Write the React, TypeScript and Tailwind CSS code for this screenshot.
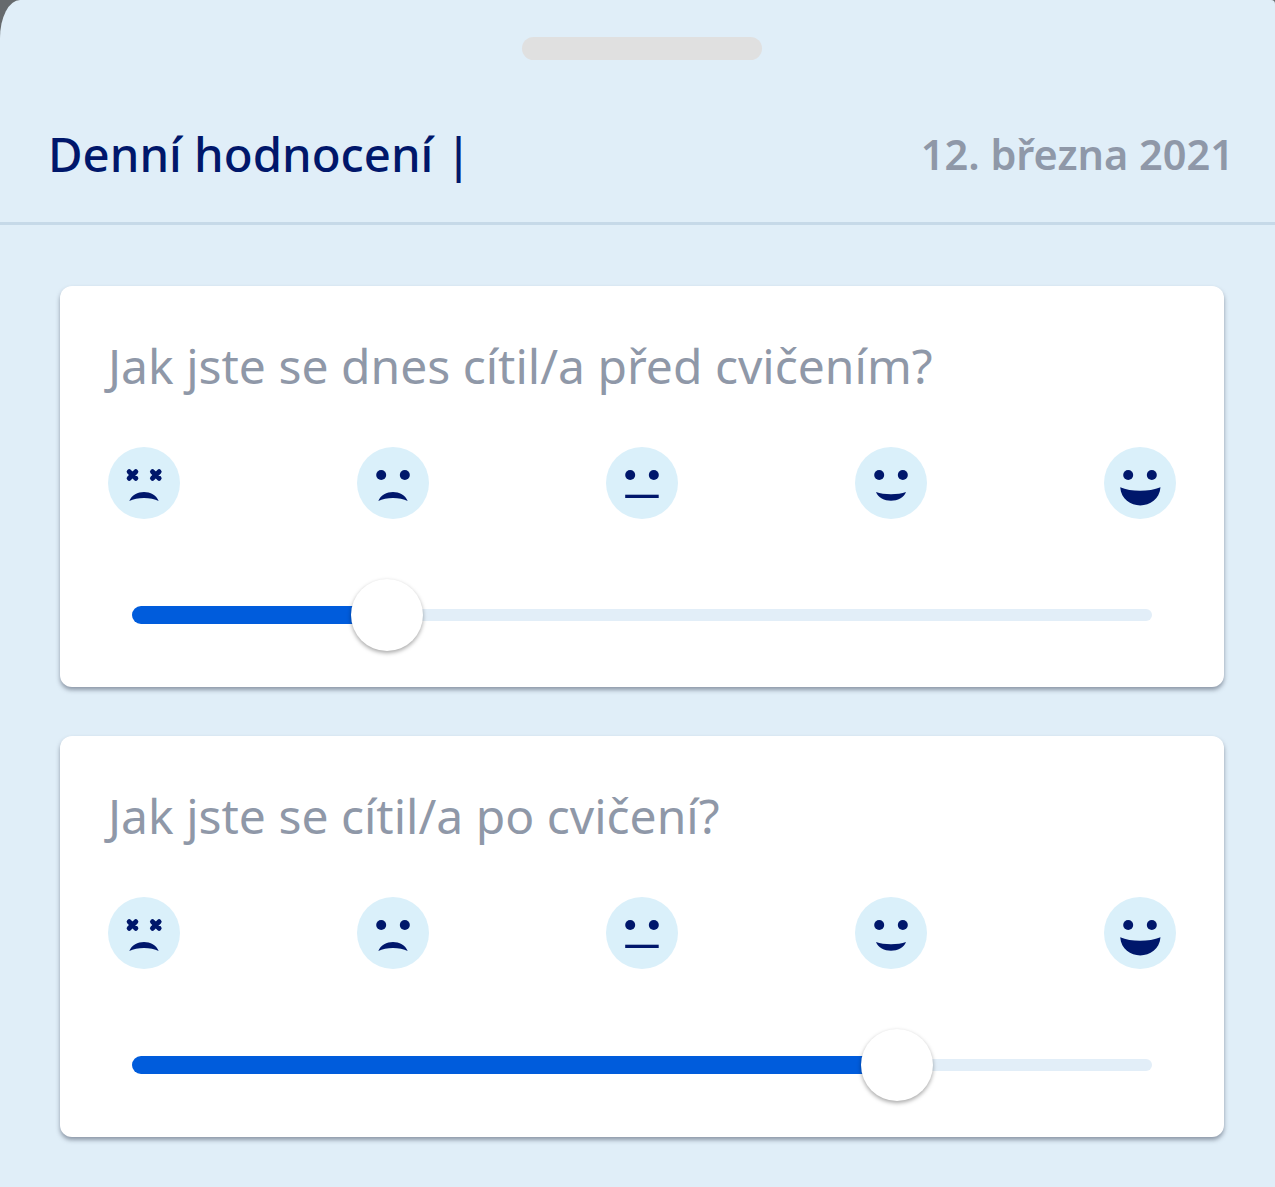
const NAVY = "#00176b";

type Kind = "dead" | "sad" | "flat" | "smile" | "grin";

function Face({ kind }: { kind: Kind }) {
  return (
    <svg width="72" height="72" viewBox="0 0 72 72" className="block shrink-0">
      <circle cx="36" cy="36" r="36" fill="#daf0fa" />
      {kind === "dead" ? (
        <g stroke={NAVY} strokeWidth="5" strokeLinecap="round">
          <path d="M21.2 24.7l6.6 6.6M27.8 24.7l-6.6 6.6M44.5 24.7l6.6 6.6M51.1 24.7l-6.6 6.6" />
        </g>
      ) : (
        <g fill={NAVY}>
          <circle cx="24.2" cy="28" r="5" />
          <circle cx="47.8" cy="28" r="5" />
        </g>
      )}
      {(kind === "dead" || kind === "sad") && (
        <path d="M21.3 54C26 42 46 42 50.7 54C43 50 29 50 21.3 54Z" fill={NAVY} />
      )}
      {kind === "flat" && <rect x="19.2" y="47.7" width="33.5" height="3.3" fill={NAVY} />}
      {kind === "smile" && <path d="M21 45C29 48 43 48 51 45C47 56.6 25 56.6 21 45Z" fill={NAVY} />}
      {kind === "grin" && <path d="M16.2 40.3C27 45 45 45 56.5 40.3C54.5 64.5 18 64.5 16.2 40.3Z" fill={NAVY} />}
    </svg>
  );
}

function Card({ question, percent }: { question: string; percent: number }) {
  const kinds: Kind[] = ["dead", "sad", "flat", "smile", "grin"];
  return (
    <section className="h-[401px] rounded-[12px] bg-white px-[48px] pt-[50px] shadow-[0_3px_4px_rgba(60,70,90,0.5)]">
      <h2 className="text-[48px] leading-[60px] font-normal text-[#8f98a8]">{question}</h2>
      <div className="mt-[51px] flex justify-between">
        {kinds.map((k) => (
          <Face key={k} kind={k} />
        ))}
      </div>
      <div className="relative mx-[24px] mt-[90px] h-[12px] rounded-full bg-[#e2eef8]">
        <div
          className="absolute top-[-3px] left-0 h-[18px] rounded-full bg-[#005cdc]"
          style={{ width: `${percent}%` }}
        />
        <div
          className="absolute top-[-30px] ml-[-36px] h-[72px] w-[72px] rounded-full bg-white shadow-[0_2px_4px_rgba(0,0,0,0.35)]"
          style={{ left: `${percent}%` }}
        />
      </div>
    </section>
  );
}

export default function App() {
  return (
    <div className="h-[1187px] w-[1275px] overflow-hidden bg-[#666a6d] font-['Noto_Sans','Open_Sans',sans-serif]">
      <div className="h-full rounded-tl-[20px_38px] rounded-tr-[4px] bg-[#e0eef8]">
        <div className="flex justify-center pt-[37px] pl-[9px]">
          <div className="h-[23px] w-[240px] rounded-full bg-[#e0e0e0]" />
        </div>
        <header className="mt-[62px] flex h-[103px] items-start justify-between border-b-[3px] border-[#c6d9e8] pr-[41px] pl-[48px]">
          <h1 className="text-[47.3px] leading-[64px] font-medium whitespace-pre text-[#00176b]">Denní hodnocení |</h1>
          <span className="text-[41.5px] leading-[64px] font-semibold text-[#8f98a8]">12. března 2021</span>
        </header>
        <main className="flex flex-col gap-[49px] px-[60px] pr-[51px] pt-[61px]">
          <Card question="Jak jste se dnes cítil/a před cvičením?" percent={25} />
          <Card question="Jak jste se cítil/a po cvičení?" percent={75} />
        </main>
      </div>
    </div>
  );
}
